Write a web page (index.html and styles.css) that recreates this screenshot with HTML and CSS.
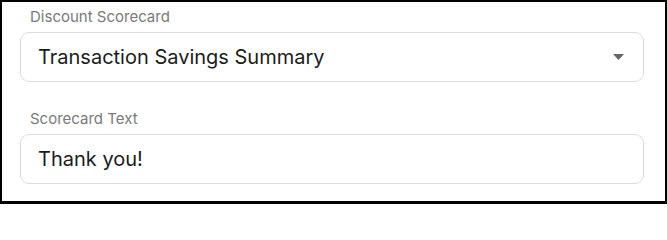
FILE: index.html
```html
<!DOCTYPE html>
<html>
<head>
<meta charset="utf-8">
<link rel="stylesheet" href="styles.css">
</head>
<body>
<div class="frame">
  <div class="field">
    <label class="label">Discount Scorecard</label>
    <div class="control select">
      <span class="value">Transaction Savings Summary</span>
      <svg class="caret" width="11" height="6" viewBox="0 0 11 6"><path d="M0 0H11L5.5 6Z" fill="#666"/></svg>
    </div>
  </div>
  <div class="field">
    <label class="label">Scorecard Text</label>
    <div class="control">
      <span class="value">Thank you!</span>
    </div>
  </div>
</div>
</body>
</html>
```
FILE: styles.css
```css
html, body {
  margin: 0;
  padding: 0;
  background: #fff;
}
.frame {
  box-sizing: border-box;
  width: 667px;
  height: 204px;
  border: 2px solid #000;
  border-bottom-width: 3px;
  padding: 5px 21px 0 18px;
  font-family: Inter, "Noto Sans", sans-serif;
  display: flex;
  flex-direction: column;
  gap: 27px;
}
.field {
  display: flex;
  flex-direction: column;
  gap: 5px;
}
.label {
  font-size: 15px;
  line-height: 20px;
  color: #7a7a7a;
  padding-left: 10px;
}
.control {
  box-sizing: border-box;
  height: 50px;
  border: 1px solid #dcdcdc;
  border-radius: 9px;
  display: flex;
  align-items: center;
  padding: 0 19px 0 17px;
}
.value {
  flex: 1;
  font-size: 20px;
  line-height: 24px;
  color: #1b1b1b;
}
.caret {
  display: block;
}
```
